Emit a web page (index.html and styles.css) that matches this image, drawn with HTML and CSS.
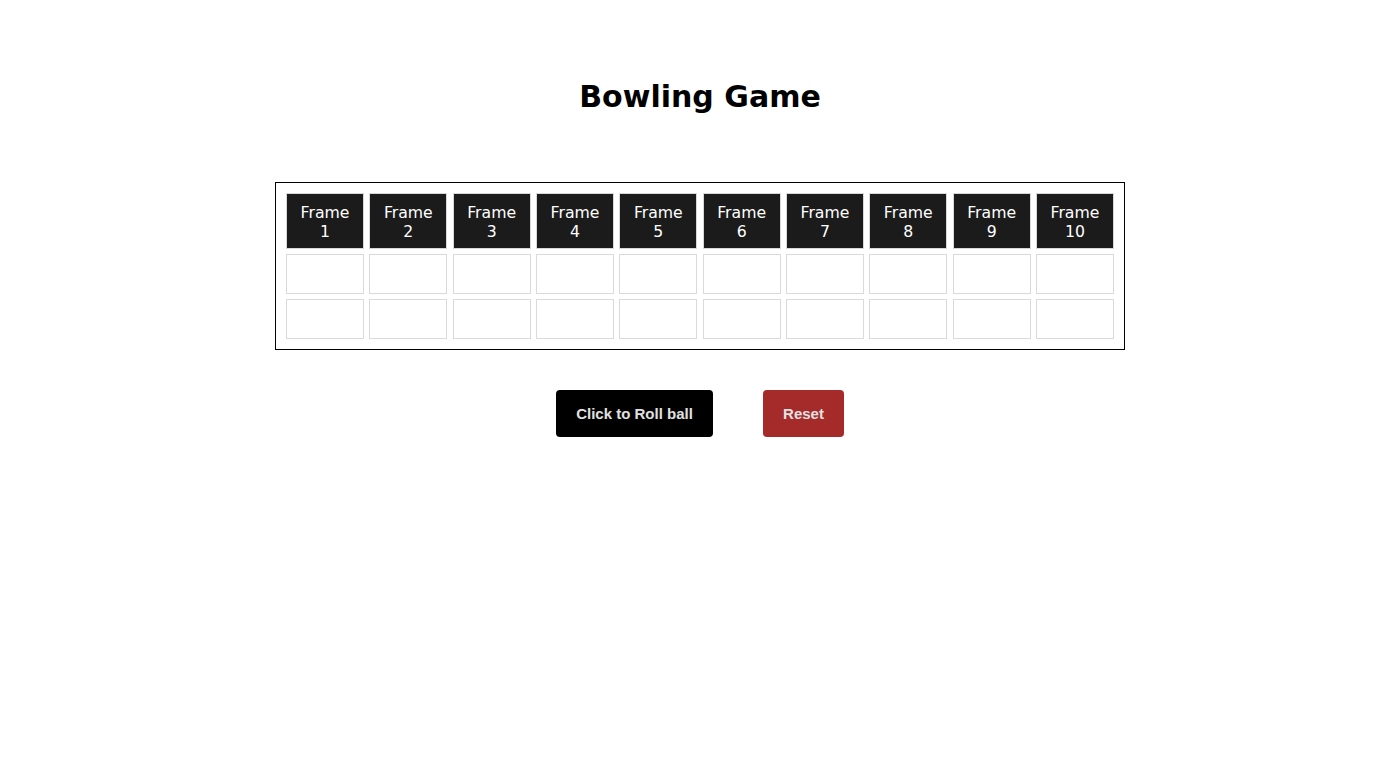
FILE: index.html
```html
<!DOCTYPE html>
<html lang="en">
<head>
<meta charset="utf-8">
<title>Bowling Game</title>
<link rel="stylesheet" href="styles.css">
</head>
<body>
<main class="page">
  <h1 class="title">Bowling Game</h1>
  <section class="board">
    <div class="head">Frame<br>1</div>
    <div class="head">Frame<br>2</div>
    <div class="head">Frame<br>3</div>
    <div class="head">Frame<br>4</div>
    <div class="head">Frame<br>5</div>
    <div class="head">Frame<br>6</div>
    <div class="head">Frame<br>7</div>
    <div class="head">Frame<br>8</div>
    <div class="head">Frame<br>9</div>
    <div class="head">Frame<br>10</div>
    <div class="cell"></div><div class="cell"></div><div class="cell"></div><div class="cell"></div><div class="cell"></div>
    <div class="cell"></div><div class="cell"></div><div class="cell"></div><div class="cell"></div><div class="cell"></div>
    <div class="cell"></div><div class="cell"></div><div class="cell"></div><div class="cell"></div><div class="cell"></div>
    <div class="cell"></div><div class="cell"></div><div class="cell"></div><div class="cell"></div><div class="cell"></div>
  </section>
  <div class="actions">
    <button class="btn btn-roll" type="button">Click to Roll ball</button>
    <button class="btn btn-reset" type="button">Reset</button>
  </div>
</main>
</body>
</html>
```

FILE: styles.css
```css
html, body {
  margin: 0;
  padding: 0;
  background: #fff;
}
body {
  font-family: "DejaVu Sans", Verdana, sans-serif;
  color: #000;
}
.page {
  padding-left: 24px;
  display: flex;
  flex-direction: column;
  align-items: center;
}
.title {
  margin: 77px 0 0;
  font-size: 30px;
  line-height: 40px;
  font-weight: bold;
}
.board {
  margin-top: 65px;
  width: 828px;
  border: 1px solid #000;
  padding: 10px;
  display: grid;
  grid-template-columns: repeat(10, 1fr);
  grid-template-rows: 56px 40px 40px;
  gap: 5px 5.3px;
}
.head {
  background: #1b1b1b;
  border: 1px solid #d8d8d8;
  color: #fff;
  font-size: 15.7px;
  line-height: 19px;
  padding-top: 2px;
  text-align: center;
  display: flex;
  align-items: center;
  justify-content: center;
}
.cell {
  border: 1px solid #dadada;
  background: #fff;
}
.actions {
  margin-top: 40px;
  display: flex;
  gap: 50px;
}
.btn {
  font-family: "Liberation Sans", Arial, sans-serif;
  font-size: 15px;
  font-weight: bold;
  color: #e0e0e0;
  border: none;
  border-radius: 4px;
  height: 47px;
  padding: 0 10px;
  cursor: pointer;
}
.btn-roll {
  background: #000;
  width: 157px;
}
.btn-reset {
  background: #a52a2a;
  width: 81px;
}
```
